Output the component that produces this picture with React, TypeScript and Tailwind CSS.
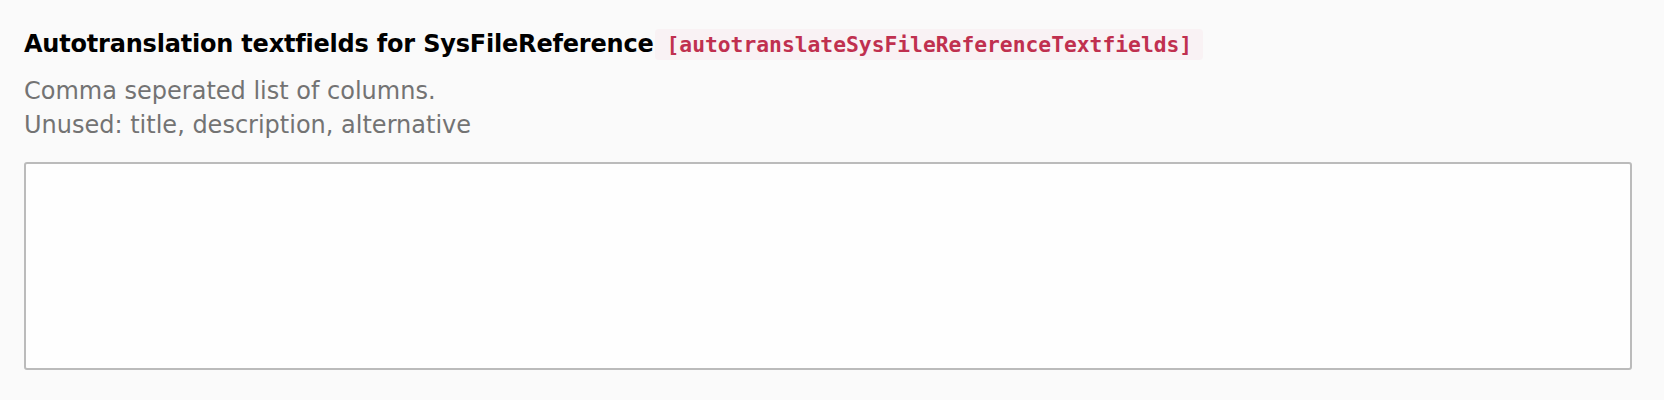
export default function App() {
    return (
        <div className="min-h-[400px] bg-[#fafafa] px-6 pt-[28px] pb-8 font-['DejaVu_Sans',sans-serif]">
            {/* Label */}
            <label className="block text-[24px] leading-[33px] font-bold tracking-[-0.2px] text-black">
                Autotranslation textfields for SysFileReference
                <code className="ml-[2px] rounded-[4px] bg-[#f9f2f4] px-[11px] py-[3px] font-['DejaVu_Sans_Mono',monospace] text-[21.3px] font-bold tracking-normal text-[#c0304f]">
                    [autotranslateSysFileReferenceTextfields]
                </code>
            </label>

            {/* Description */}
            <div className="mt-[13px] text-[24px] leading-[34px] text-[#737373]">
                <p>Comma seperated list of columns.</p>
                <p>Unused: title, description, alternative</p>
            </div>

            {/* Field */}
            <textarea
                className="mt-[20px] block h-[208px] w-[1608px] resize-none rounded-[3px] border-2 border-[#bbbbbb] bg-[#fefefe] outline-none"
            />
        </div>
    );
}
